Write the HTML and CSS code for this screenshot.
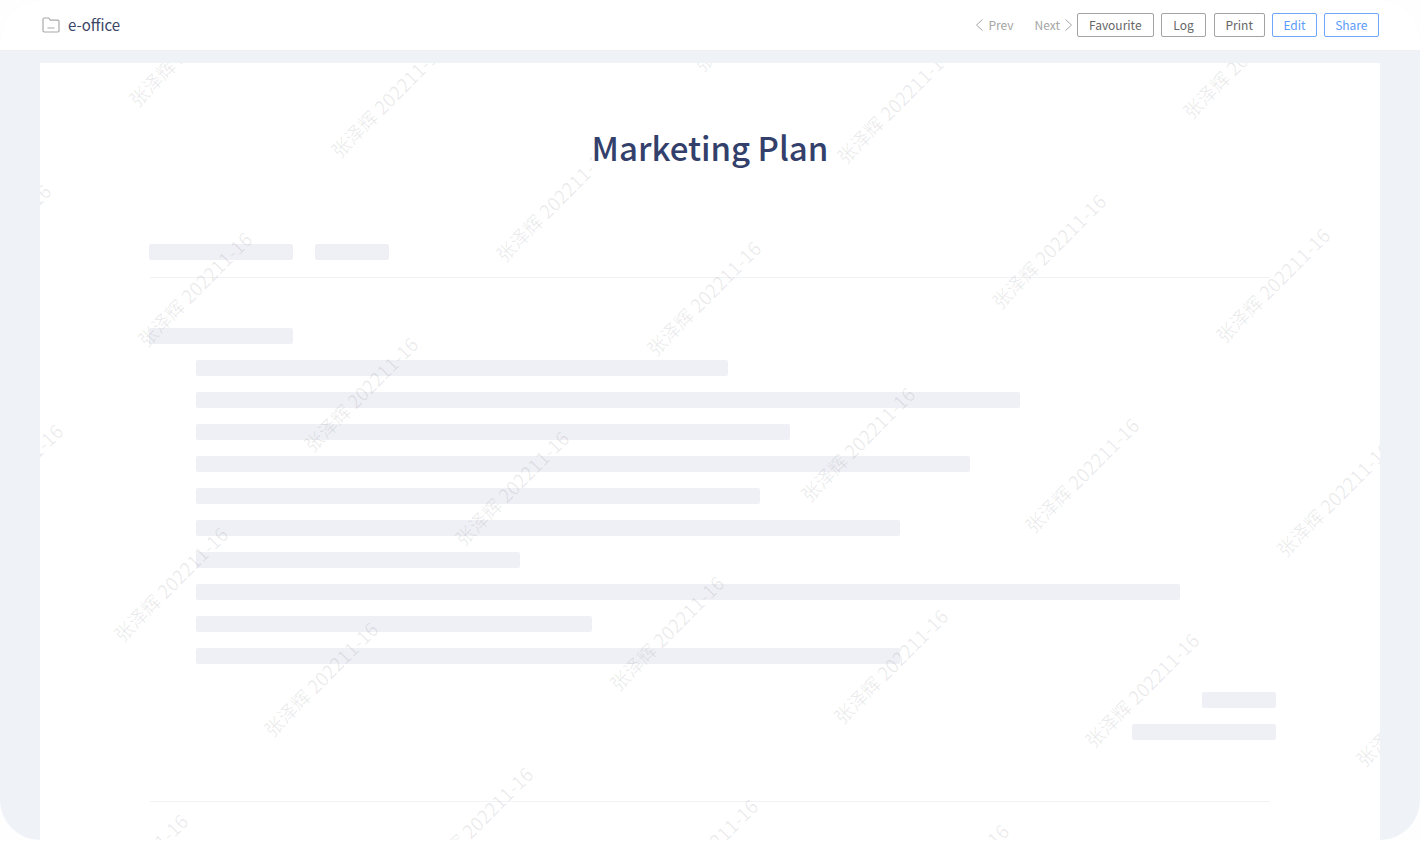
FILE: index.html
```html
<!DOCTYPE html>
<html lang="en">
<head>
<meta charset="utf-8">
<title>Marketing Plan</title>
<link rel="stylesheet" href="styles.css">
</head>
<body>
<div class="shell">
  <header class="topbar">
    <div class="brand">
      <svg class="folder" width="18" height="16" viewBox="0 0 18 16" fill="none" stroke="#a9a9a9" stroke-width="1.2"><path d="M1 2.2C1 1.5 1.5 1 2.2 1H6.6L8.3 3.2H15.8C16.5 3.2 17 3.7 17 4.4V13.8C17 14.5 16.5 15 15.8 15H2.2C1.5 15 1 14.5 1 13.8Z"/><path d="M5.5 11H12.5"/></svg>
      <span class="brand-name">e-office</span>
    </div>
    <nav class="actions">
      <a class="pager pager-prev"><svg width="9" height="14" viewBox="0 0 9 14" fill="none" stroke="#a6a6a6" stroke-width="1"><path d="M7.5 1.5L1.5 7L7.5 12.5"/></svg>Prev</a>
      <a class="pager pager-next">Next<svg width="9" height="14" viewBox="0 0 9 14" fill="none" stroke="#a6a6a6" stroke-width="1"><path d="M1.5 1.5L7.5 7L1.5 12.5"/></svg></a>
      <button class="btn">Favourite</button>
      <button class="btn btn-log">Log</button>
      <button class="btn">Print</button>
      <button class="btn btn-blue">Edit</button>
      <button class="btn btn-blue">Share</button>
    </nav>
  </header>
  <main class="panel">
    <article class="card">
      <div class="marks">
        <span class="wm wm1">张泽辉 202211-16</span><span class="wm wm2">张泽辉 202211-16</span><span class="wm wm3">张泽辉 202211-16</span>
        <span class="wm wm4">张泽辉 202211-16</span><span class="wm wm5">张泽辉 202211-16</span><span class="wm wm6">张泽辉 202211-16</span>
        <span class="wm wm7">张泽辉 202211-16</span><span class="wm wm8">张泽辉 202211-16</span><span class="wm wm9">张泽辉 202211-16</span>
        <span class="wm wm10">张泽辉 202211-16</span><span class="wm wm11">张泽辉 202211-16</span><span class="wm wm12">张泽辉 202211-16</span>
        <span class="wm wm13">张泽辉 202211-16</span><span class="wm wm14">张泽辉 202211-16</span><span class="wm wm15">张泽辉 202211-16</span>
        <span class="wm wm16">张泽辉 202211-16</span><span class="wm wm17">张泽辉 202211-16</span><span class="wm wm18">张泽辉 202211-16</span>
        <span class="wm wm19">张泽辉 202211-16</span><span class="wm wm20">张泽辉 202211-16</span><span class="wm wm21">张泽辉 202211-16</span>
        <span class="wm wm22">张泽辉 202211-16</span><span class="wm wm23">张泽辉 202211-16</span><span class="wm wm24">张泽辉 202211-16</span>
        <span class="wm wm25">张泽辉 202211-16</span><span class="wm wm26">张泽辉 202211-16</span><span class="wm wm27">张泽辉 202211-16</span>
      </div>
      <div class="title-row"><h1 class="title">Marketing Plan</h1></div>
      <div class="meta">
        <div class="bar" style="width:144px"></div>
        <div class="bar" style="width:74px"></div>
      </div>
      <div class="heading"><div class="bar" style="width:144px"></div></div>
      <div class="rows">
        <div class="bar" style="width:532px"></div>
        <div class="bar" style="width:824px"></div>
        <div class="bar" style="width:594px"></div>
        <div class="bar" style="width:774px"></div>
        <div class="bar" style="width:564px"></div>
        <div class="bar" style="width:704px"></div>
        <div class="bar" style="width:324px"></div>
        <div class="bar" style="width:984px"></div>
        <div class="bar" style="width:396px"></div>
        <div class="bar" style="width:704px"></div>
      </div>
      <div class="sign">
        <div class="bar" style="width:74px"></div>
        <div class="bar" style="width:144px"></div>
      </div>
      <div class="rule"></div>
    </article>
  </main>
</div>
</body>
</html>
```
FILE: styles.css
```css
* { box-sizing: border-box; }
html, body { margin: 0; height: 100%; overflow: hidden; background: #fefefe; }
body { font-family: "Noto Sans CJK SC", "Noto Sans", sans-serif; }

.shell {
  height: 840px;
  display: flex;
  flex-direction: column;
  border-radius: 40px;
  overflow: hidden;
  background: #eff3f8;
}

.topbar {
  flex: none;
  height: 51px;
  padding: 0 41.5px 1px 43px;
  display: flex;
  align-items: center;
  justify-content: space-between;
  background: #fff;
  border-bottom: 1px solid #edeff3;
}
.brand { display: flex; align-items: center; gap: 8px; }
.folder { display: block; margin-left: -1px; }
.brand-name { font-size: 15px; line-height: 24px; color: #3a4568; }

.actions { display: flex; align-items: center; }
.pager { display: flex; align-items: center; font-size: 12px; line-height: 20px; color: #a6a6a6; gap: 4px; }
.pager-prev { margin-right: 21px; }
.pager-next { margin-right: 4px; }
.btn {
  height: 24px;
  margin-left: 7.5px;
  padding: 0 11px;
  font: 12px/22px "Noto Sans CJK SC", "Noto Sans", sans-serif;
  color: #666;
  background: #fff;
  border: 1px solid #a3a3a3;
  border-radius: 2px;
}
.pager-next + .btn { margin-left: 0; }
.btn-log { padding: 0 11.25px; }
.btn-blue { padding: 0 10px; color: #5b9bfb; border-color: #6ea6fb; }

.panel { flex: 1; min-height: 0; padding: 12px 40px 0; }
.card {
  position: relative;
  height: 100%;
  padding: 60px 110px 0;
  background: #fff;
  overflow: hidden;
}

.marks { position: absolute; inset: 0; z-index: 1; pointer-events: none; }
.wm {
  position: absolute;
  font-size: 18.9px;
  line-height: 24px;
  white-space: nowrap;
  color: rgba(40, 40, 60, 0.09);
  transform: translate(calc(-50% - 1.5px), -50%) rotate(-45deg);
}
.wm1 { left: 147px; top: -14px; }
.wm2 { left: 349px; top: 37px; }
.wm3 { left: 855px; top: 43px; }
.wm4 { left: 1201px; top: -2px; }
.wm5 { left: 712px; top: -49px; }
.wm6 { left: 514px; top: 141px; }
.wm7 { left: -45px; top: 178px; }
.wm8 { left: 1010px; top: 188px; }
.wm9 { left: 1234px; top: 222px; }
.wm10 { left: 665px; top: 235px; }
.wm11 { left: 156px; top: 226px; }
.wm12 { left: 322px; top: 331px; }
.wm13 { left: 819px; top: 381px; }
.wm14 { left: 1043px; top: 412px; }
.wm15 { left: 1295px; top: 436px; }
.wm16 { left: 473px; top: 425px; }
.wm17 { left: 132px; top: 521px; }
.wm18 { left: 628px; top: 570px; }
.wm19 { left: 282px; top: 616px; }
.wm20 { left: 852px; top: 603px; }
.wm21 { left: 1103px; top: 627px; }
.wm22 { left: 1374px; top: 646px; }
.wm23 { left: -33px; top: 418px; }
.wm24 { left: 92px; top: 808px; }
.wm25 { left: 437px; top: 761px; }
.wm26 { left: 662px; top: 793px; }
.wm27 { left: 913px; top: 818px; }

.title-row { position: relative; z-index: 2; display: flex; justify-content: center; }
.title {
  margin: 0;
  font-size: 33px;
  font-weight: 500;
  line-height: 48px;
  color: #33406b;
  background: #fff;
}

.bar { height: 16px; flex: none; background: #eff0f5; border-radius: 2px; }
.meta {
  margin-top: 73px;
  margin-left: -1px;
  padding-bottom: 18px;
  display: flex;
  gap: 22px;
  position: relative;
}
.meta::after {
  content: "";
  position: absolute;
  left: 1px;
  right: 0;
  bottom: 0;
  height: 1px;
  background: #f1f2f5;
}
.heading { margin: 50px 0 0 -1px; }
.rows { margin-top: 16px; padding-left: 46px; display: flex; flex-direction: column; gap: 16px; }
.sign { margin: 28px -6px 0 0; display: flex; flex-direction: column; align-items: flex-end; gap: 16px; }
.rule { height: 1px; margin-top: 61px; background: #f1f2f5; }
```
